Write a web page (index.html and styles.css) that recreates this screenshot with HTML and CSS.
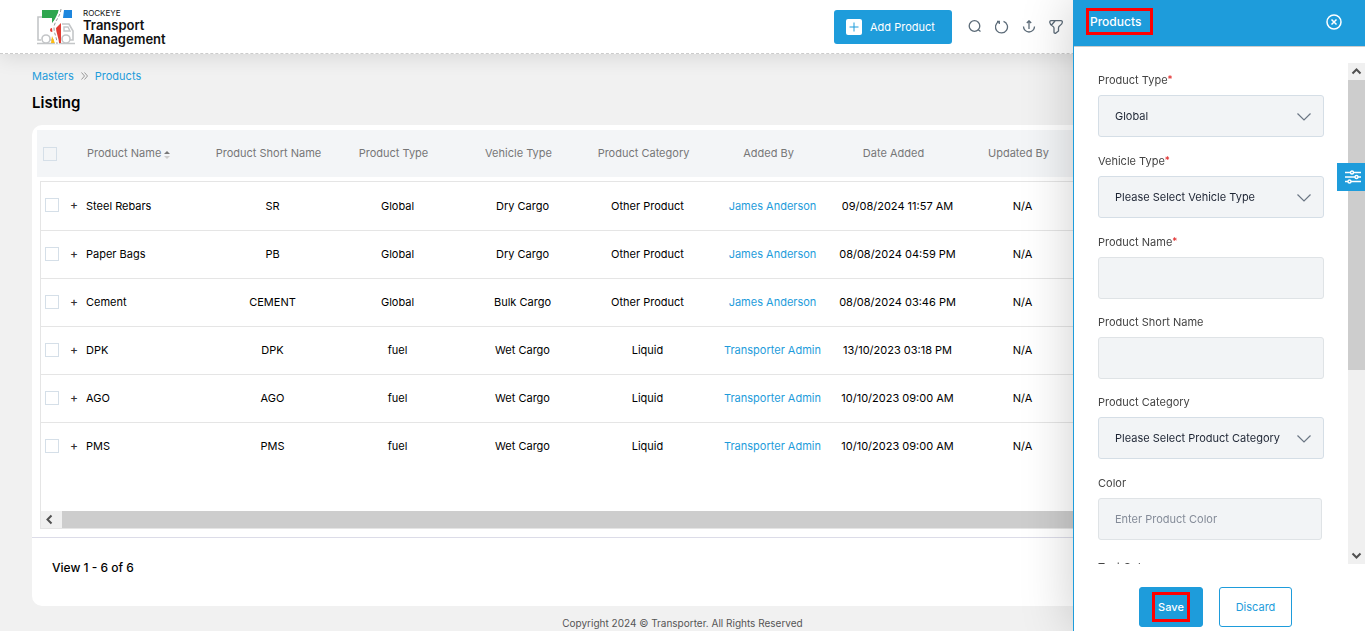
FILE: index.html
```html
<!DOCTYPE html>
<html lang="en">

<head>
    <meta charset="UTF-8">
    <meta name="viewport" content="width=device-width, initial-scale=1.0">
    <title>Products</title>
    <link rel="stylesheet" href="styles.css">
</head>

<body>
    <header class="topbar">
        <a class="brand" href="#">
            <svg class="brand-logo" width="38" height="36" viewBox="0 0 38 36" fill="none">
                <path d="M5 8H1V31H4M13 31H17M25 15H32L36 22V31H33" stroke="#c4c6c8" stroke-width="1.6" />
                <path d="M27 18H31L33 22H27Z" stroke="#c4c6c8" stroke-width="1.4" />
                <path d="M0 34.5H38" stroke="#c4c6c8" stroke-width="1.6" />
                <circle cx="9" cy="30" r="4" fill="#fff" stroke="#c4c6c8" stroke-width="1.6" />
                <circle cx="29" cy="30" r="4" fill="#fff" stroke="#c4c6c8" stroke-width="1.6" />
                <path d="M5 1H22L20 8L15 14V9H5Z" fill="#2fa64f" />
                <path d="M27 1H35V9H26Z" fill="#1d86dd" />
                <path d="M24 14V34H22L18 26L18 20Z" fill="#e23c33" />
                <circle cx="15" cy="21" r="2" fill="#e23c33" />
                <path d="M15 27L18 34H14Z" fill="#fbbc14" />
                <path d="M24 0C23 9 17 12 17 19C17 25 20 28 20 35" stroke="#fff" stroke-width="4" />
                <path d="M24 0C23 9 17 12 17 19C17 25 20 28 20 35" stroke="#999" stroke-dasharray="3 2" />
            </svg>
            <span class="brand-text">
                <small>ROCKEYE</small>
                <span>Transport</span>
                <span>Management</span>
            </span>
        </a>
        <div class="tools">
            <button class="add-btn" type="button">
                <svg width="16" height="16" viewBox="0 0 16 16">
                    <rect width="16" height="16" rx="2" fill="#fff" />
                    <path d="M8 3.5V12.5M3.5 8H12.5" stroke="#1e9cdb" />
                </svg>
                Add Product
            </button>
            <button class="tool" type="button" aria-label="Search">
                <svg width="14" height="14" viewBox="0 0 14 14">
                    <circle cx="6.5" cy="6" r="5.3" />
                    <path d="M10 9.5L12.5 11.5" />
                </svg>
            </button>
            <button class="tool" type="button" aria-label="Refresh">
                <svg width="14" height="14" viewBox="0 0 14 14">
                    <path d="M4 1.5A6 6 0 1 0 8.5 1.3M4.3 4V1.5H2" />
                </svg>
            </button>
            <button class="tool" type="button" aria-label="Export">
                <svg width="14" height="14" viewBox="0 0 14 14">
                    <path d="M1.5 6.5A5.5 5.5 0 0 0 12.5 6.5M7 9V.8M4.8 3L7 .8L9.2 3" />
                </svg>
            </button>
            <button class="tool" type="button" aria-label="Filter">
                <svg width="14" height="14" viewBox="0 0 14 14">
                    <path d="M2 .7H12Q13.5 .7 13.3 2.5Q13.2 4 11 5.5Q9.5 6.5 9.5 8V11L6.5 13.3Q5 13.5 5 12V8Q5 7 3.5 6Q1 4.5 .8 2.5Q.7 .7 2 .7ZM6 1L2.5 5" />
                </svg>
            </button>
        </div>
    </header>

    <main class="content">
        <nav class="crumbs">
            <a href="#">Masters</a>
            <svg width="7" height="8" viewBox="0 0 7 8">
                <path d="M.5 .5L3.5 4L.5 7.5M3.5 .5L6.5 4L3.5 7.5" fill="none" stroke="#999" />
            </svg>
            <a href="#">Products</a>
        </nav>
        <h1>Listing</h1>

        <section class="card">
            <div class="grid-head">
                <table class="grid">
                    <colgroup>
                        <col class="c-check">
                        <col class="c-data" span="8">
                        <col>
                    </colgroup>
                    <thead>
                        <tr>
                            <th class="check"><input type="checkbox" aria-label="Select all"></th>
                            <th class="name">Product Name
                                <svg width="6" height="8" viewBox="0 0 6 8">
                                    <path d="M0 3L3 0L6 3Z" fill="#777" />
                                    <path d="M0 5L3 8L6 5Z" fill="#ccc" />
                                </svg>
                            </th>
                            <th>Product Short Name</th>
                            <th>Product Type</th>
                            <th>Vehicle Type</th>
                            <th>Product Category</th>
                            <th>Added By</th>
                            <th>Date Added</th>
                            <th>Updated By</th>
                            <th></th>
                        </tr>
                    </thead>
                </table>
            </div>
            <div class="grid-body">
                <table class="grid">
                    <colgroup>
                        <col class="c-check">
                        <col class="c-data" span="8">
                        <col>
                    </colgroup>
                    <tbody>
                        <tr>
                            <td class="check"><div class="pick"><input type="checkbox" aria-label="Select Steel Rebars"><button class="expand" type="button">+</button></div></td>
                            <td class="name">Steel Rebars</td>
                            <td>SR</td>
                            <td>Global</td>
                            <td>Dry Cargo</td>
                            <td>Other Product</td>
                            <td><a href="#">James Anderson</a></td>
                            <td>09/08/2024 11:57 AM</td>
                            <td>N/A</td>
                            <td></td>
                        </tr>
                        <tr>
                            <td class="check"><div class="pick"><input type="checkbox" aria-label="Select Paper Bags"><button class="expand" type="button">+</button></div></td>
                            <td class="name">Paper Bags</td>
                            <td>PB</td>
                            <td>Global</td>
                            <td>Dry Cargo</td>
                            <td>Other Product</td>
                            <td><a href="#">James Anderson</a></td>
                            <td>08/08/2024 04:59 PM</td>
                            <td>N/A</td>
                            <td></td>
                        </tr>
                        <tr>
                            <td class="check"><div class="pick"><input type="checkbox" aria-label="Select Cement"><button class="expand" type="button">+</button></div></td>
                            <td class="name">Cement</td>
                            <td>CEMENT</td>
                            <td>Global</td>
                            <td>Bulk Cargo</td>
                            <td>Other Product</td>
                            <td><a href="#">James Anderson</a></td>
                            <td>08/08/2024 03:46 PM</td>
                            <td>N/A</td>
                            <td></td>
                        </tr>
                        <tr>
                            <td class="check"><div class="pick"><input type="checkbox" aria-label="Select DPK"><button class="expand" type="button">+</button></div></td>
                            <td class="name">DPK</td>
                            <td>DPK</td>
                            <td>fuel</td>
                            <td>Wet Cargo</td>
                            <td>Liquid</td>
                            <td><a href="#">Transporter Admin</a></td>
                            <td>13/10/2023 03:18 PM</td>
                            <td>N/A</td>
                            <td></td>
                        </tr>
                        <tr>
                            <td class="check"><div class="pick"><input type="checkbox" aria-label="Select AGO"><button class="expand" type="button">+</button></div></td>
                            <td class="name">AGO</td>
                            <td>AGO</td>
                            <td>fuel</td>
                            <td>Wet Cargo</td>
                            <td>Liquid</td>
                            <td><a href="#">Transporter Admin</a></td>
                            <td>10/10/2023 09:00 AM</td>
                            <td>N/A</td>
                            <td></td>
                        </tr>
                        <tr>
                            <td class="check"><div class="pick"><input type="checkbox" aria-label="Select PMS"><button class="expand" type="button">+</button></div></td>
                            <td class="name">PMS</td>
                            <td>PMS</td>
                            <td>fuel</td>
                            <td>Wet Cargo</td>
                            <td>Liquid</td>
                            <td><a href="#">Transporter Admin</a></td>
                            <td>10/10/2023 09:00 AM</td>
                            <td>N/A</td>
                            <td></td>
                        </tr>
                    </tbody>
                </table>
                <div class="hscroll">
                    <svg width="17" height="17" viewBox="0 0 17 17">
                        <path d="M10.5 4.5L6.5 8.5L10.5 12.5" />
                    </svg>
                    <div class="hscroll-thumb"></div>
                </div>
            </div>
            <div class="pager">View 1 - 6 of 6</div>
        </section>
    </main>

    <footer class="copyright">Copyright 2024 © Transporter. All Rights Reserved</footer>

    <aside class="drawer">
        <div class="drawer-head">
            <h2 class="marked">Products</h2>
            <button class="close" type="button" aria-label="Close">
                <svg width="16" height="16" viewBox="0 0 16 16" fill="none" stroke="#fff">
                    <circle cx="8" cy="8" r="7" stroke-width="1.5" />
                    <path d="M5.5 5.5L10.5 10.5M10.5 5.5L5.5 10.5" stroke-width="1.5" />
                </svg>
            </button>
        </div>
        <form class="drawer-form">
            <div class="form-scroll">
                <div class="fields">
                    <div class="field">
                        <label for="ptype">Product Type<sup>*</sup></label>
                        <div class="select">
                            <select id="ptype" name="ptype">
                                <option>Global</option>
                            </select>
                            <svg width="14" height="8" viewBox="0 0 14 8"><path d="M.5 .5L7 7L13.5 .5" /></svg>
                        </div>
                    </div>
                    <div class="field">
                        <label for="vtype">Vehicle Type<sup>*</sup></label>
                        <div class="select">
                            <select id="vtype" name="vtype">
                                <option>Please Select Vehicle Type</option>
                            </select>
                            <svg width="14" height="8" viewBox="0 0 14 8"><path d="M.5 .5L7 7L13.5 .5" /></svg>
                        </div>
                    </div>
                    <div class="field text">
                        <label for="pname">Product Name<sup>*</sup></label>
                        <input id="pname" name="pname" type="text">
                    </div>
                    <div class="field text">
                        <label for="sname">Product Short Name</label>
                        <input id="sname" name="sname" type="text">
                    </div>
                    <div class="field">
                        <label for="pcat">Product Category</label>
                        <div class="select">
                            <select id="pcat" name="pcat">
                                <option>Please Select Product Category</option>
                            </select>
                            <svg width="14" height="8" viewBox="0 0 14 8"><path d="M.5 .5L7 7L13.5 .5" /></svg>
                        </div>
                    </div>
                    <div class="field color">
                        <label for="color">Color</label>
                        <input id="color" name="color" type="text" placeholder="Enter Product Color">
                    </div>
                    <div class="field color">
                        <label for="tcolor">Text Color</label>
                        <input id="tcolor" name="tcolor" type="text">
                    </div>
                </div>
                <div class="vscroll">
                    <svg width="17" height="17" viewBox="0 0 17 17"><path d="M4.5 10.5L8.5 6.5L12.5 10.5" /></svg>
                    <div class="vscroll-track">
                        <div class="vscroll-thumb"></div>
                    </div>
                    <svg width="17" height="17" viewBox="0 0 17 17"><path d="M4.5 6.5L8.5 10.5L12.5 6.5" /></svg>
                </div>
            </div>
            <div class="actions">
                <button class="save" type="submit"><span class="marked">Save</span></button>
                <button class="discard" type="button">Discard</button>
            </div>
        </form>
        <button class="settings-tab" type="button" aria-label="Settings">
            <svg width="16" height="14" viewBox="0 0 16 14" fill="none" stroke="#fff" stroke-width="1.4">
                <path d="M0 2.5H16M0 7H16M0 11.5H16" />
                <g fill="#1e9cdb">
                    <circle cx="7" cy="2.5" r="1.5" />
                    <circle cx="11.5" cy="7" r="1.5" />
                    <circle cx="4.5" cy="11.5" r="1.5" />
                </g>
            </svg>
        </button>
    </aside>
</body>

</html>
```

FILE: styles.css
```css
:root {
    --blue: #1e9cdb;
    --drawer: 292px;
}

* {
    box-sizing: border-box;
}

body {
    margin: 0;
    height: 100vh;
    overflow: hidden;
    background: #f1f1f1;
    font: 11px/16px Inter, "Liberation Sans", sans-serif;
    color: #000;
}

a {
    color: var(--blue);
    text-decoration: none;
}

button,
input,
select {
    font: inherit;
    margin: 0;
}

button {
    padding: 0;
    border: 0;
    background: none;
    cursor: pointer;
}

svg {
    display: block;
    flex: none;
}

/* top bar */
.topbar {
    display: flex;
    justify-content: space-between;
    align-items: center;
    height: 54px;
    padding: 0 calc(var(--drawer) + 10px) 0 37px;
    background: #fff;
    border-bottom: 1px dashed #ccc;
    box-shadow: 0 4px 20px rgba(0, 0, 0, 0.1);
}

.brand {
    display: flex;
    align-items: center;
    gap: 8px;
    color: #111;
}

.brand-text {
    display: flex;
    flex-direction: column;
    font-size: 13px;
    font-weight: 600;
    line-height: 14px;
}

.brand-text small {
    font-size: 8px;
    font-weight: 400;
    line-height: 10px;
}

.tools {
    display: flex;
    align-items: center;
    gap: 13px;
}

.add-btn {
    display: flex;
    align-items: center;
    gap: 8px;
    width: 118px;
    height: 34px;
    margin-right: 3px;
    padding-left: 12px;
    border-radius: 3px;
    background: var(--blue);
    color: #fff;
}

.tool svg {
    fill: none;
    stroke: #5c6b78;
    stroke-width: 1.3;
}

/* listing */
.content {
    padding: 14px 32px 0;
}

.crumbs {
    display: flex;
    align-items: center;
    gap: 7px;
}

h1 {
    margin: 8px 0 12px;
    font-size: 15px;
    font-weight: 600;
    line-height: 21px;
}

.card {
    padding-top: 5px;
    border-radius: 10px;
    background: #fff;
}

.grid-head {
    margin: 0 5px 4px;
    overflow: hidden;
    background: #f3f5f7;
}

.grid-body {
    margin: 0 8px;
    overflow: hidden;
    border: 1px solid #e5e5e5;
}

.grid {
    width: 100%;
    table-layout: fixed;
    border-collapse: collapse;
    text-align: center;
}

.c-check {
    width: 44px;
}

.c-data {
    width: 125px;
}

.grid th,
.grid td {
    height: 48px;
    padding: 0;
    font-weight: 400;
    white-space: nowrap;
}

.grid th {
    height: 47px;
    padding-bottom: 2px;
    color: #777;
}

.grid td {
    border-bottom: 1px solid #e5e5e5;
}

.grid tr:last-child td {
    border-bottom: 0;
}

.grid .name {
    padding-left: 1px;
    text-align: left;
}

.grid th.name {
    padding-left: 6px;
}

.name svg {
    display: inline-block;
    vertical-align: -2px;
}

.grid .check {
    padding-left: 4px;
    text-align: left;
}

.grid th.check {
    padding-left: 6px;
}

.check input {
    appearance: none;
    width: 14px;
    height: 14px;
    border: 1px solid #d5dfe8;
    vertical-align: middle;
}

.pick {
    display: flex;
    align-items: center;
    gap: 10px;
    height: 16px;
    padding-bottom: 1px;
}

.expand {
    width: 10px;
    color: #333;
    font-size: 12px;
    font-weight: 500;
    line-height: 14px;
}

.hscroll {
    display: flex;
    gap: 4px;
    margin-top: 41px;
    background: #f0f0f0;
}

.hscroll svg,
.vscroll svg {
    fill: none;
    stroke: #505050;
    stroke-width: 2;
}

.hscroll-thumb {
    flex: 1;
    background: #cdcdcd;
}

.pager {
    margin-top: 8px;
    padding: 20px 20px 28px;
    border-top: 1px solid #dcdce8;
    font-size: 12px;
    font-weight: 500;
    line-height: 20px;
}

.copyright {
    padding-top: 9px;
    font-size: 10px;
    color: #555;
    text-align: center;
}

/* side drawer */
.drawer {
    position: fixed;
    top: 0;
    right: 0;
    bottom: 0;
    display: flex;
    flex-direction: column;
    width: var(--drawer);
    border-left: 1px solid var(--blue);
    background: #fff;
    box-shadow: 0 0 50px rgba(0, 0, 0, 0.2);
}

.drawer-head {
    display: flex;
    justify-content: space-between;
    align-items: center;
    height: 47px;
    padding: 0 23px 3px 12px;
    border-bottom: 1px solid #ccc;
    background: var(--blue);
    color: #fff;
}

.drawer-head h2 {
    margin: 0;
    font-size: 12px;
    font-weight: 500;
    line-height: 21px;
}

.marked {
    border: 3px solid #f00;
}

.drawer-head .marked {
    padding: 0 9px 0 1px;
}

.drawer-form {
    flex: 1;
    display: flex;
    flex-direction: column;
    min-height: 0;
    padding-top: 16px;
}

.form-scroll {
    flex: 1;
    display: flex;
    min-height: 0;
    overflow: hidden;
}

.fields {
    flex: 1;
    padding: 9px 24px 0;
    overflow: hidden;
}

.field {
    margin-bottom: 16px;
}

.field.text {
    margin-bottom: 15px;
}

.field.color {
    margin-bottom: 19px;
    padding-right: 2px;
}

.field label {
    display: block;
    margin-bottom: 7px;
    color: #444;
}

.field sup {
    color: #e02020;
    font-size: 10px;
    line-height: 0;
    vertical-align: 1px;
}

.field input,
.field select {
    display: block;
    width: 100%;
    height: 42px;
    padding: 0 16px;
    border: 1px solid #d5dee6;
    border-radius: 3px;
    background: #f2f4f6;
    color: #1d2433;
}

.field select {
    appearance: none;
}

.field input {
    border-color: #dfe3e6;
}

.field input::placeholder {
    color: #848b98;
}

.select {
    position: relative;
}

.select svg {
    position: absolute;
    top: 18px;
    right: 13px;
    fill: none;
    stroke: #6b7684;
    stroke-width: 1.2;
    pointer-events: none;
}

.vscroll {
    display: flex;
    flex-direction: column;
    background: #f0f0f0;
}

.vscroll-track {
    flex: 1;
}

.vscroll-thumb {
    height: 62%;
    background: #cdcdcd;
}

.actions {
    display: flex;
    justify-content: center;
    gap: 16px;
    padding: 23px 8px 4px 0;
}

.save,
.discard {
    height: 40px;
    border: 1px solid var(--blue);
    border-radius: 3px;
}

.save {
    width: 64px;
    background: var(--blue);
    color: #fff;
    font-weight: 500;
}

.save .marked {
    display: inline-block;
    padding: 4px 3px;
}

.discard {
    width: 73px;
    background: #fff;
    color: var(--blue);
}

.settings-tab {
    position: absolute;
    top: 163px;
    right: 0;
    display: flex;
    align-items: center;
    justify-content: center;
    width: 28px;
    height: 28px;
    padding-left: 3px;
    background: var(--blue);
}
```
